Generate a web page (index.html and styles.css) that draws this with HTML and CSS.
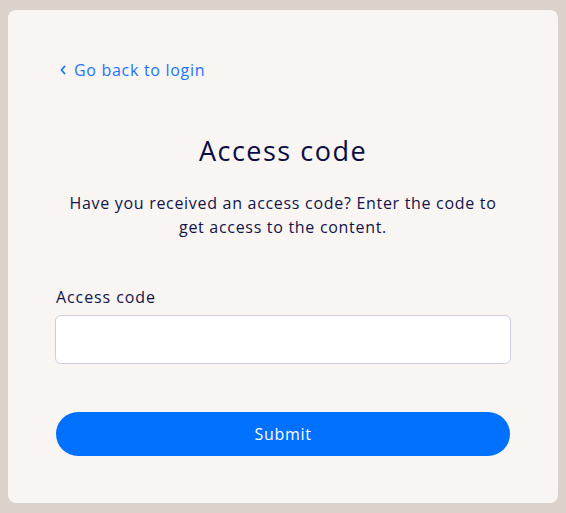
FILE: index.html
```html
<!DOCTYPE html>
<html lang="en">
<head>
<meta charset="utf-8">
<title>Access code</title>
<link rel="stylesheet" href="styles.css">
</head>
<body>
<main class="card">
  <a class="back" href="#">
    <svg class="chev" width="8" height="10" viewBox="0 0 8 10" aria-hidden="true"><path d="M5.5 1.5 L2.5 5 L5.5 8.5" fill="none" stroke="currentColor" stroke-width="1.8" stroke-linecap="round" stroke-linejoin="round"/></svg>
    <span>Go back to login</span>
  </a>
  <h1 class="title">Access code</h1>
  <p class="desc">Have you received an access code? Enter the code to get access to the content.</p>
  <label class="label" for="code">Access code</label>
  <input class="input" id="code" type="text">
  <button class="submit" type="button">Submit</button>
</main>
</body>
</html>
```
FILE: styles.css
```css
* { box-sizing: border-box; }
html, body { margin: 0; }
body {
  background: #dcd2cc;
  padding: 10px 8px;
  font-family: "Open Sans", sans-serif;
  color: #12144a;
  letter-spacing: 0.7px;
}
.card {
  background: #f8f5f2;
  border-radius: 8px;
  height: 493px;
  padding: 48px 48px 47px;
  display: flex;
  flex-direction: column;
}
.back {
  display: flex;
  align-items: center;
  gap: 7px;
  color: #1a74ff;
  text-decoration: none;
  font-size: 16px;
  line-height: 24px;
  margin-left: 3px;
  align-self: flex-start;
}
.chev { display: block; }
.title {
  margin: 51px 0 0;
  text-align: center;
  font-weight: 400;
  font-size: 27px;
  line-height: 36px;
  letter-spacing: 1.5px;
  color: #0b0c45;
}
.desc {
  margin: 22px 0 0;
  text-align: center;
  font-size: 16px;
  line-height: 24px;
  padding: 0 10px;
}
.label {
  margin-top: 46px;
  font-size: 16px;
  line-height: 24px;
  letter-spacing: 0.9px;
}
.input {
  margin-top: 6px;
  height: 49px;
  width: calc(100% + 2px);
  margin-left: -1px;
  border: 1px solid #cdd0da;
  border-radius: 6px;
  background: #fff;
  font: inherit;
  padding: 0 12px;
}
.submit {
  margin-top: 48px;
  height: 44px;
  border: none;
  border-radius: 22px;
  background: #0070ff;
  color: #fff;
  font-family: inherit;
  font-size: 16px;
  letter-spacing: 0.7px;
  cursor: pointer;
}
```
